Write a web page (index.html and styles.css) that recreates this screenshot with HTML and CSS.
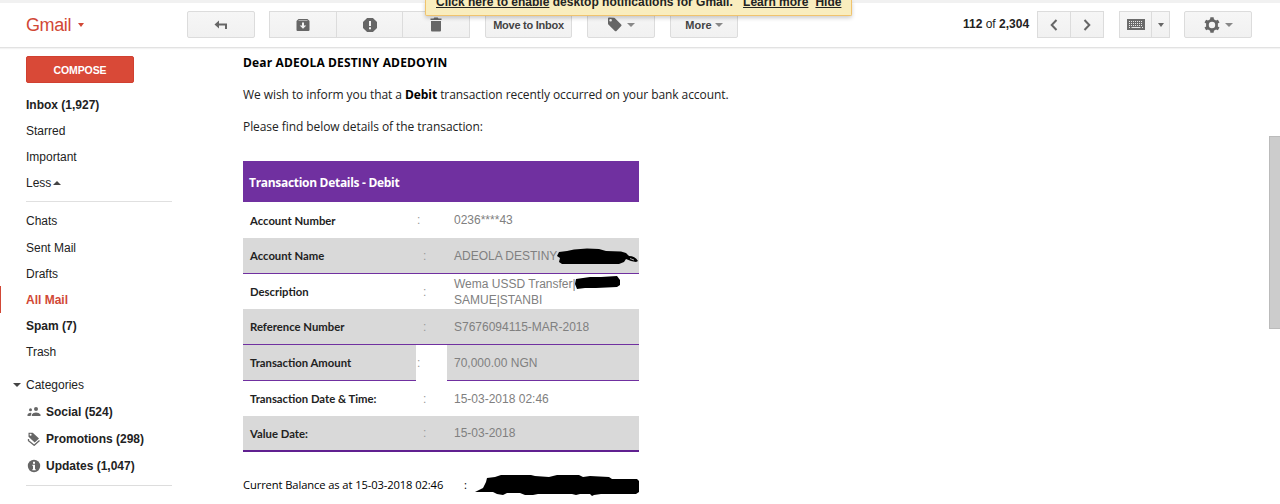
FILE: index.html
```html
<!DOCTYPE html>
<html lang="en">
<head>
  <meta charset="UTF-8">
  <meta name="viewport" content="width=device-width, initial-scale=1.0">
  <title>Gmail - All Mail</title>
  <link rel="stylesheet" href="styles.css">
</head>
<body>
  <div class="notice"><p><a>Click here to enable</a> desktop notifications for Gmail. <a class="learn">Learn more</a><a class="hide">Hide</a></p></div>

  <header class="toolbar">
    <div class="logo">Gmail <span class="caret red"></span></div>
    <div class="button reply">
      <svg width="14" height="12" viewBox="0 0 14 12"><path d="M.5 5.500 5 1.500v8z" fill="#666"/><path d="M4 5.500h8V10" fill="none" stroke="#666" stroke-width="2"/></svg>
    </div>
    <div class="group">
      <div class="button">
        <svg width="14" height="14" viewBox="0 0 14 14"><path d="M2.5 1h9L13.5 3v9q0 1-1 1h-11q-1 0-1-1V3zM2.5 2.3v.5h9v-.5zM6 4.5v3H3.7L7 10.8l3.3-3.3H8v-3z" fill="#666" fill-rule="evenodd"/></svg>
      </div>
      <div class="button">
        <svg width="14" height="14" viewBox="0 0 14 14"><path d="M4.1 0h5.8L14 4.1v5.8L9.9 14H4.1L0 9.9V4.1z" fill="#666"/><path d="M6 3h2v5H6zM6 9.2h2v2H6z" fill="#f5f5f5"/></svg>
      </div>
      <div class="button">
        <svg width="12" height="15" viewBox="0 0 12 15"><path d="M.5 1.500h3l.8-1h3.400l.8 1h3V3H.5zM1 4h10v9.500q0 1-1 1H2q-1 0-1-1z" fill="#666"/></svg>
      </div>
    </div>
    <div class="button move">Move to Inbox</div>
    <div class="button tag">
      <svg width="15" height="15" viewBox="0 0 15 15"><path d="M1 1.500q0-1 1-1l5 .3q.7.100 1.200.6l6 6q.8.800 0 1.600l-4.700 4.900q-.8.700-1.600 0L1.600 7.800Q1 7.200 1 6.500zM2.300 3.300a1.300 1.300 0 1 0 2.600 0a1.300 1.300 0 1 0-2.600 0" fill="#666" fill-rule="evenodd"/></svg>
      <span class="caret"></span>
    </div>
    <div class="button more">More <span class="caret"></span></div>
    <div class="count"><b>112</b> of <b>2,304</b></div>
    <div class="group pager">
      <div class="button">
        <svg width="8" height="12" viewBox="0 0 8 12"><path d="M6.500 1 1.700 6l4.800 5" fill="none" stroke="#666" stroke-width="2"/></svg>
      </div>
      <div class="button">
        <svg width="8" height="12" viewBox="0 0 8 12"><path d="M1.500 1 6.300 6l-4.800 5" fill="none" stroke="#666" stroke-width="2"/></svg>
      </div>
    </div>
    <div class="group input-tools">
      <div class="button">
        <svg width="18" height="11" viewBox="0 0 18 11"><path d="M0 0h18v11H0z" fill="#6b6b6b"/><path d="M2 2.500h14M2 4.500h14M2 6.500h14" stroke="#e8e8e8" stroke-width="1" stroke-dasharray="1 1"/><path d="M2 8.500h1M4.500 8.500h9M15 8.500h1" stroke="#e8e8e8"/></svg>
      </div>
      <div class="button arrow"><span class="caret"></span></div>
    </div>
    <div class="button settings">
      <svg width="16" height="16" viewBox="0 0 16 16"><circle cx="8" cy="8" r="4.600" fill="none" stroke="#666" stroke-width="2.800"/><path d="M6.400.3h3.200l.5 3H5.900zM6.400 15.700h3.200l.5-3H5.900zM.5 5.500 2.100 2.800l3 1.300L3 7zM13 9l2.500 1.500-1.600 2.700-3-1.300zM15.500 5.500l-1.600-2.700-3 1.300L13 7zM3 9 .5 10.500l1.600 2.700 3-1.300z" fill="#666"/></svg>
      <span class="caret"></span>
    </div>
  </header>

  <div class="page">
    <nav class="sidebar">
      <div class="compose">COMPOSE</div>
      <ul>
        <li class="unread">Inbox (1,927)</li>
        <li>Starred</li>
        <li>Important</li>
        <li>Less<span class="caret up"></span></li>
      </ul>
      <ul class="labels">
        <li>Chats</li>
        <li>Sent Mail</li>
        <li>Drafts</li>
        <li class="current">All Mail</li>
        <li class="unread">Spam (7)</li>
        <li>Trash</li>
      </ul>
      <div class="categories"><span class="caret dark"></span>Categories</div>
      <ul class="tabs">
        <li>
          <svg width="14" height="14" viewBox="0 0 14 14"><circle cx="3.500" cy="4.800" r="1.500"/><circle cx="9" cy="4" r="2"/><path d="M.5 11V9.500Q1.500 7.500 4.500 7.900L3.600 11zM4.800 11V9.600Q6 7.500 9 7.500t4.500 2.100V11z"/></svg>
          Social (524)
        </li>
        <li>
          <svg width="14" height="14" viewBox="0 0 14 14"><path d="M1.500.8h4.300l6.200 5.700-4.300 4L1.500 4.800zM2.600 2.700a1 1 0 1 0 2 0a1 1 0 1 0-2 0" fill-rule="evenodd"/><path d="M1.500 7v1.700l5.700 4.600 5.300-4.800" fill="none" stroke="#666" stroke-width="1.300"/></svg>
          Promotions (298)
        </li>
        <li>
          <svg width="14" height="14" viewBox="0 0 14 14"><circle cx="7" cy="7" r="6.200"/><path d="M6 2.700h2v2H6zM5.300 5.800H8v4.500h.8v1H5.300v-1H6V6.800h-.7z" fill="#fff"/></svg>
          Updates (1,047)
        </li>
      </ul>
    </nav>

    <main class="message">
      <p class="greeting">Dear ADEOLA DESTINY ADEDOYIN</p>
      <p class="intro">We wish to inform you that a <b>Debit</b> transaction recently occurred on your bank account.</p>
      <p class="please">Please find below details of the transaction:</p>

      <div class="details">
        <div class="title"><span>Transaction Details - Debit</span></div>
        <div class="row near">
          <div class="name">Account Number</div><div class="colon">:</div><div class="value">0236****43</div>
        </div>
        <div class="row shaded">
          <div class="name">Account Name</div><div class="colon">:</div>
          <div class="value">ADEOLA DESTINY
            <svg class="mark mark-name" width="82" height="18" viewBox="0 0 82 18"><path d="M2 4 10 3 17 1.500 30 .5 42 1 49 3 64 3.500 69 5 72 8Q78 8 81 13L79 14 74 13 69 11 67 14 62 16H5L2 14 3 10 0 8z"/><path d="M73 10.500l4 1.500" stroke="#d9d9d9" stroke-width=".8"/></svg>
          </div>
        </div>
        <div class="row">
          <div class="name">Description</div><div class="colon">:</div>
          <div class="value">Wema USSD Transfer|<br>SAMUE|STANBI
            <svg class="mark mark-payee" width="46" height="14" viewBox="0 0 46 14"><path d="M1 3 8 2 15 1 26 1 42 0 45 4 45 9 42 11 21 12 10 12 2 13 0 8z"/></svg>
          </div>
        </div>
        <div class="row shaded">
          <div class="name">Reference Number</div><div class="colon">:</div><div class="value">S7676094115-MAR-2018</div>
        </div>
        <div class="row shaded near gap">
          <div class="name">Transaction Amount</div><div class="colon">:</div><div class="value">70,000.00 NGN</div>
        </div>
        <div class="row">
          <div class="name">Transaction Date &amp; Time:</div><div class="colon">:</div><div class="value">15-03-2018 02:46</div>
        </div>
        <div class="row shaded last">
          <div class="name">Value Date:</div><div class="colon">:</div><div class="value">15-03-2018</div>
        </div>
      </div>

      <div class="balance">
        <span class="balance-text">Current Balance as at 15-03-2018 02:46</span>
        <span class="balance-colon">:</span>
        <svg width="164" height="22" viewBox="0 0 164 22"><path d="M0 17 8 13 11 7 12 3 20 2 26 0H56L60 1 74 2 82 0 104 0 108 2 115 1 134 2 137 4 162 4 164 6V17L161 19H126L119 20 117 21 115 19 105 19 101 20 97 19 63 19 58 20 50 20 45 18 32 18 28 20 22 19 18 17z"/></svg>
      </div>
    </main>

    <div class="scrollbar"></div>
  </div>
</body>
</html>
```
FILE: styles.css
```css
* {
  box-sizing: border-box;
}
body {
  margin: 0;
  width: 1280px;
  height: 504px;
  overflow: hidden;
  background: #fff;
  color: #222;
  font-family: "Liberation Sans", Arial, sans-serif;
  font-size: 12px;
}
p, ul {
  margin: 0;
  padding: 0;
}
ul {
  list-style: none;
}
svg {
  display: block;
  flex: none;
}

/* notification strip hanging over the toolbar */
.notice {
  position: absolute;
  left: 425px;
  top: 0;
  width: 427px;
  height: 16px;
  background: #f9edbe;
  border: 1px solid #f0c36d;
  border-top: 0;
  border-radius: 0 0 2px 2px;
  box-shadow: 0 2px 4px rgba(0, 0, 0, 0.2);
  font-weight: bold;
  white-space: nowrap;
}
.notice p {
  margin: -5px 0 0 10px;
  line-height: 14px;
}
.notice a {
  text-decoration: underline;
}
.notice .learn {
  margin-left: 7px;
}
.notice .hide {
  margin-left: 7px;
}

/* toolbar */
.toolbar {
  display: flex;
  align-items: flex-start;
  height: 48px;
  padding: 8px 0 0 26px;
  border-top: 3px solid #f1f1f1;
  border-bottom: 1px solid #e2e2e2;
  box-shadow: 0 1px 1px #f3f3f3;
}
.logo {
  display: flex;
  align-items: center;
  width: 161px;
  height: 28px;
  color: #d14836;
  font-size: 18px;
  letter-spacing: -0.4px;
}
.caret {
  border: 4px solid transparent;
  border-top-color: #888;
  border-bottom: 0;
}
.caret.red {
  margin-left: 7px;
  border-top-color: #d14836;
  border-width: 4px 3.5px 0;
}
.caret.up {
  margin-left: 2px;
  border-top: 0;
  border-bottom: 4px solid #444;
}
.caret.dark {
  border-top-color: #444;
  margin-right: 5px;
}
.button {
  display: flex;
  flex: none;
  align-items: center;
  justify-content: center;
  width: 68px;
  height: 27px;
  border: 1px solid #dcdcdc;
  border-radius: 2px;
  background: linear-gradient(#f6f6f6, #f1f1f1);
  color: #444;
  font-size: 11px;
  font-weight: bold;
  white-space: nowrap;
}
.group {
  display: flex;
  flex: none;
  margin-left: 15px;
}
.reply + .group {
  margin-left: 14px;
}
.group .button {
  border-radius: 0;
}
.group .button + .button {
  margin-left: -1px;
}
.group .button:nth-child(2) {
  width: 67px;
}
.move {
  width: 87px;
  margin-left: 15px;
  letter-spacing: -0.25px;
}
.tag {
  gap: 5px;
  margin-left: 15px;
}
.more {
  gap: 3px;
  margin-left: 15px;
}
.count {
  width: 67px;
  margin-left: 225px;
  line-height: 26px;
}
.pager {
  margin-left: 7px;
}
.group.pager .button {
  width: 34px;
}
.group.input-tools .button {
  width: 33px;
}
.group.input-tools .arrow {
  width: 19px;
}
.input-tools .caret {
  border-width: 4px 3.5px 0;
  border-top-color: #666;
}
.settings {
  gap: 5px;
  margin-left: 14px;
}

/* sidebar */
.page {
  display: flex;
  height: 456px;
}
.sidebar {
  width: 243px;
  padding-top: 8px;
}
.compose {
  width: 108px;
  height: 27px;
  margin: 0 0 8px 26px;
  border: 1px solid #d14030;
  border-radius: 2px;
  background: #d94937;
  color: #fff;
  font-size: 10.5px;
  font-weight: bold;
  letter-spacing: -0.1px;
  line-height: 26px;
  text-align: center;
}
.sidebar li {
  display: flex;
  align-items: center;
  height: 26.2px;
  padding-top: 1px;
  padding-left: 26px;
}
.sidebar .unread {
  font-weight: bold;
}
.labels {
  margin-top: 5px;
}
.labels::before {
  content: "";
  display: block;
  width: 146px;
  height: 1px;
  margin: 0 0 6px 26px;
  background: #e0e0e0;
}
.sidebar .current {
  padding-left: 25px;
  border-left: 1px solid #d14836;
  color: #d14836;
  font-weight: bold;
}
.categories {
  display: flex;
  align-items: center;
  height: 26px;
  margin-top: 7px;
  padding-left: 13px;
}
.tabs {
  width: 146px;
  height: 88px;
  margin-left: 26px;
  border-bottom: 1px solid #ddd;
}
.sidebar .tabs li {
  height: 27.2px;
  padding-left: 1px;
  gap: 5px;
  font-weight: bold;
  white-space: nowrap;
}
.tabs svg {
  fill: #666;
}

/* message body */
.message {
  width: 396px;
  flex: none;
  padding-top: 1px;
  color: #222;
  font-family: "Open Sans", sans-serif;
  font-size: 12px;
}
.message p {
  height: 32px;
  letter-spacing: -0.07px;
  line-height: 28px;
  white-space: nowrap;
}
.message b,
.message .greeting {
  color: #000;
  font-weight: bold;
}
.message .greeting {
  letter-spacing: 0.14px;
}
.details {
  margin-top: 16px;
  width: 396px;
}
.title {
  height: 41px;
  padding-left: 6px;
  background: #7030a0;
  color: #fff;
  font-weight: bold;
  letter-spacing: -0.3px;
  line-height: 43px;
}
.row {
  display: flex;
  height: 36px;
}
.row > div {
  display: flex;
  align-items: center;
}
.row .name {
  width: 173px;
  padding-left: 7px;
  font-family: Lato, sans-serif;
  font-size: 11.3px;
  font-weight: bold;
}
.row .colon {
  width: 31px;
  padding-left: 7px;
  color: #999;
  font-family: "Liberation Sans", Arial, sans-serif;
}
.row.near .colon {
  padding-left: 1px;
}
.row .value {
  position: relative;
  flex: 1;
  padding-left: 7px;
  color: #808080;
  font-family: "Liberation Sans", Arial, sans-serif;
  line-height: 16px;
  white-space: nowrap;
}
.row.shaded > div {
  background: #d9d9d9;
  border-bottom: 1px solid #7030a0;
}
.row:nth-child(4),
.row:nth-child(7) {
  height: 35px;
}
.row.last > div {
  border-bottom: 2px solid #602090;
}
.row.gap .colon {
  background: none;
  border: 0;
}
.mark {
  position: absolute;
}
.mark-name {
  left: 110px;
  top: 10px;
}
.mark-payee {
  left: 128px;
  top: 2px;
}
.balance {
  display: flex;
  align-items: center;
  height: 22px;
  margin-top: 23px;
  color: #000;
  font-size: 11.2px;
  line-height: 20px;
  white-space: nowrap;
}
.balance-text {
  width: 222px;
  margin-top: -2px;
  letter-spacing: -0.11px;
}
.balance-colon {
  width: 11px;
  margin-top: -2px;
}

.scrollbar {
  width: 11px;
  height: 193px;
  margin: 88px 0 0 auto;
  background: #ccc;
  border: 1px solid #bbb;
  border-right: 0;
}
```
